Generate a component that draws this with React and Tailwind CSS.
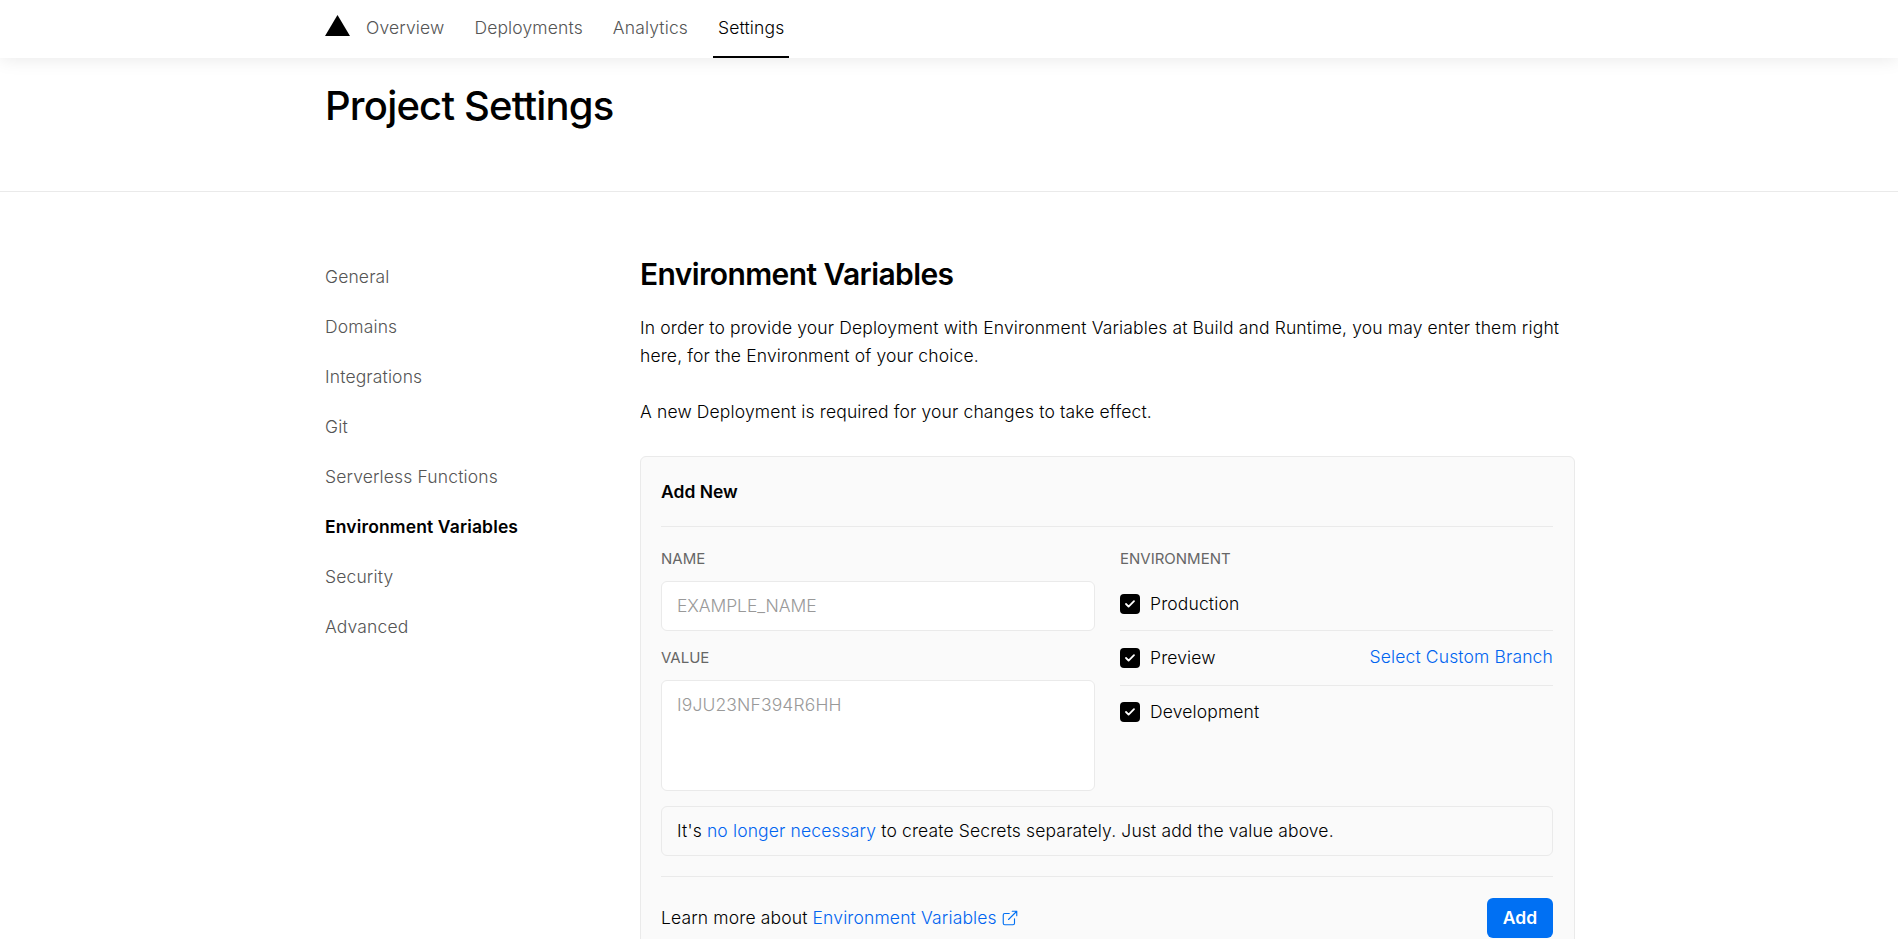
import React from "react";

const TABS = ["Overview", "Deployments", "Analytics", "Settings"];

const SECTIONS = [
  "General",
  "Domains",
  "Integrations",
  "Git",
  "Serverless Functions",
  "Environment Variables",
  "Security",
  "Advanced",
];

function CheckRow({ label, className, children }) {
  return (
    <div className={`flex items-center justify-between ${className}`}>
      <label className="flex items-center gap-[10px]">
        <span className="flex size-5 items-center justify-center rounded-[4px] bg-black">
          <svg width="20" height="20" viewBox="0 0 20 20" fill="none" stroke="#fff" strokeWidth="1.8" strokeLinecap="round" strokeLinejoin="round">
            <path d="M14 7.2 8.6 12.6 6 10" />
          </svg>
        </span>
        {label}
      </label>
      {children}
    </div>
  );
}

function FieldLabel({ children }) {
  return <div className="text-[15px] leading-6 font-normal tracking-normal text-[#666]">{children}</div>;
}

export default function App() {
  return (
    <div className="h-[939px] overflow-hidden bg-white font-['Inter',sans-serif] text-[17.5px] leading-7 font-light tracking-[0.14px] text-black">
      <header className="relative h-[58px] bg-white shadow-[0_0_19px_rgba(0,0,0,0.1)]">
        <div className="mx-auto flex h-full w-[1252px] items-start pl-[2px]">
          <svg className="mt-[15px] mr-[11px]" width="25" height="21" viewBox="0 0 25 21">
            <path d="M12.5 0 25 21H0z" fill="#000" />
          </svg>
          <nav className="flex h-full gap-5">
            {TABS.map((tab) => (
              <a
                key={tab}
                className={`h-[58px] px-[5px] pt-[14px] ${tab === "Settings" ? "border-b-2 border-black text-black" : "text-[#555]"}`}
              >
                {tab}
              </a>
            ))}
          </nav>
        </div>
      </header>

      <div className="h-[134px] border-b border-[#eaeaea]">
        <div className="mx-auto w-[1252px] pt-[18px] pl-[2px]">
          <h1 className="text-[40px] leading-[60px] font-medium tracking-[-0.02em]">Project Settings</h1>
        </div>
      </div>

      <div className="mx-auto flex w-[1252px] pt-[60px] pl-[2px]">
        <aside className="w-[315px] shrink-0">
          {SECTIONS.map((s) => (
            <a
              key={s}
              className={`flex h-[50px] items-center ${s === "Environment Variables" ? "font-semibold text-black" : "text-[#555]"}`}
            >
              {s}
            </a>
          ))}
        </aside>

        <main className="w-[935px] shrink-0">
          <h2 className="text-[30px] leading-[45px] font-semibold tracking-[-0.02em]">Environment Variables</h2>
          <p className="mt-[17px]">
            In order to provide your Deployment with Environment Variables at Build and Runtime, you may enter them
            right
            <br />
            here, for the Environment of your choice.
          </p>
          <p className="mt-7">A new Deployment is required for your changes to take effect.</p>

          <section className="mt-[30px] rounded-[6px] border border-[#eaeaea] bg-[#fafafa] pr-[21px] pb-5 pl-5">
            <h3 className="h-[70px] border-b border-[#eaeaea] pt-[21px] font-semibold tracking-normal">Add New</h3>
            <div className="flex gap-[25px]">
              <div className="flex w-[434px] flex-col pt-5">
                <FieldLabel>NAME</FieldLabel>
                <div className="mt-[10px] h-[50px] rounded-[6px] border border-[#eaeaea] bg-white px-[15px] py-[10px] tracking-[-0.08px] text-[#999]">
                  EXAMPLE_NAME
                </div>
                <div className="h-[15px]" />
                <FieldLabel>VALUE</FieldLabel>
                <div className="mt-[10px] h-[111px] rounded-[6px] border border-[#eaeaea] bg-white px-[15px] py-[10px] text-[#999]">
                  I9JU23NF394R6HH
                </div>
              </div>
              <div className="w-[433px] pt-5">
                <FieldLabel>ENVIRONMENT</FieldLabel>
                <CheckRow label="Production" className="h-[60px] border-b border-[#eaeaea] pt-[7px]" />
                <CheckRow label="Preview" className="h-[55px] border-b border-[#eaeaea]">
                  <a className="pb-[2px] text-[#0064f0]">Select Custom Branch</a>
                </CheckRow>
                <CheckRow label="Development" className="h-[52px]" />
              </div>
            </div>
            <div className="mt-[15px] h-[50px] rounded-[6px] border border-[#eaeaea] px-[15px] py-[10px]">
              It's <a className="text-[#0064f0]">no longer necessary</a> to create Secrets separately. Just add the
              value above.
            </div>
            <div className="mt-5 flex items-start justify-between border-t border-[#eaeaea] pt-[21px]">
              <div className="flex pt-[6px]">
                <span>
                  Learn more about <a className="text-[#0064f0]">Environment Variables</a>
                </span>
                <svg className="mt-[5px] ml-[4px]" width="18" height="18" viewBox="0 0 24 24" fill="none" stroke="#0070f3" strokeWidth="1.5" strokeLinecap="round" strokeLinejoin="round">
                  <path d="M18 13v6a2 2 0 0 1-2 2H5a2 2 0 0 1-2-2V8a2 2 0 0 1 2-2h6M15 3h6v6M10 14 21 3" />
                </svg>
              </div>
              <button className="h-10 w-[66px] rounded-[6px] bg-[#0070f3] font-semibold text-white">Add</button>
            </div>
          </section>
        </main>
      </div>
    </div>
  );
}
